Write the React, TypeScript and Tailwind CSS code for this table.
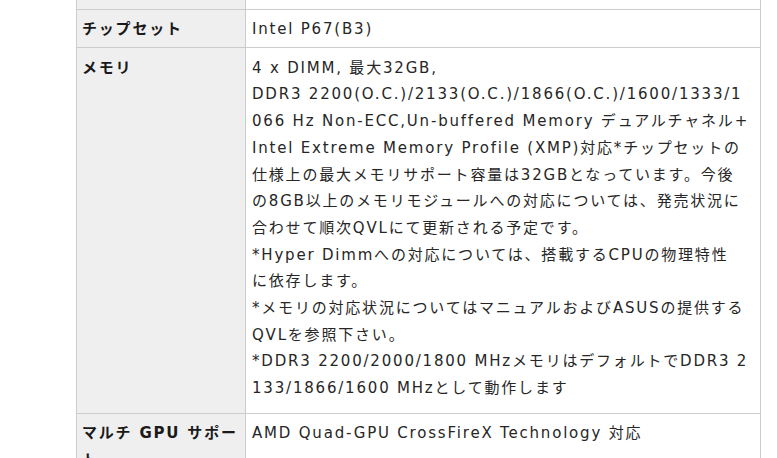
interface SpecRow {
  label: string[];
  value: string[];
  pad: string;
}

export default function App() {
  const rows: SpecRow[] = [
    {
      label: ["チップセット"],
      value: ["Intel P67(B3)"],
      pad: "pt-[6px] pb-[4px]",
    },
    {
      label: ["メモリ"],
      value: [
        "4 x DIMM, 最大32GB,",
        "DDR3 2200(O.C.)/2133(O.C.)/1866(O.C.)/1600/1333/1",
        "066 Hz Non-ECC,Un-buffered Memory デュアルチャネル+",
        "Intel Extreme Memory Profile (XMP)対応*チップセットの",
        "仕様上の最大メモリサポート容量は32GBとなっています。今後",
        "の8GB以上のメモリモジュールへの対応については、発売状況に",
        "合わせて順次QVLにて更新される予定です。",
        "*Hyper Dimmへの対応については、搭載するCPUの物理特性",
        "に依存します。",
        "*メモリの対応状況についてはマニュアルおよびASUSの提供する",
        "QVLを参照下さい。",
        "*DDR3 2200/2000/1800 MHzメモリはデフォルトでDDR3 2",
        "133/1866/1600 MHzとして動作します",
      ],
      pad: "pt-[7px] pb-[11px]",
    },
    {
      label: ["マルチ GPU サポー", "ト"],
      value: ["AMD Quad-GPU CrossFireX Technology 対応"],
      pad: "pt-[6px] pb-[6px]",
    },
  ];

  return (
    <div className="h-[458px] w-[777px] overflow-hidden bg-white font-['DejaVu_Sans','Noto_Sans_CJK_JP',sans-serif] text-[15px] leading-[26.7px] tracking-[1.8px] text-[#262626]">
      <div className="ml-[76px] w-[685px] border-x border-[#ccc]">
        {/* 前の行の下端 */}
        <div className="flex h-[10px] border-b border-[#ccc]">
          <div className="w-[169px] shrink-0 border-r border-[#ccc] bg-[#efefef]" />
          <div className="grow" />
        </div>

        {rows.map((row, i) => (
          <div key={i} className="flex border-b border-[#ccc]">
            <div
              className={`w-[169px] shrink-0 border-r border-[#ccc] bg-[#efefef] pl-[5px] font-bold text-[#1a1a1a] ${row.pad}`}
            >
              {row.label.map((line, j) => (
                <span key={j} className="block whitespace-nowrap">
                  {line}
                </span>
              ))}
            </div>
            <div className={`grow pl-[6px] ${row.pad}`}>
              {row.value.map((line, j) => (
                <span key={j} className="block whitespace-nowrap">
                  {line}
                </span>
              ))}
            </div>
          </div>
        ))}
      </div>
    </div>
  );
}
